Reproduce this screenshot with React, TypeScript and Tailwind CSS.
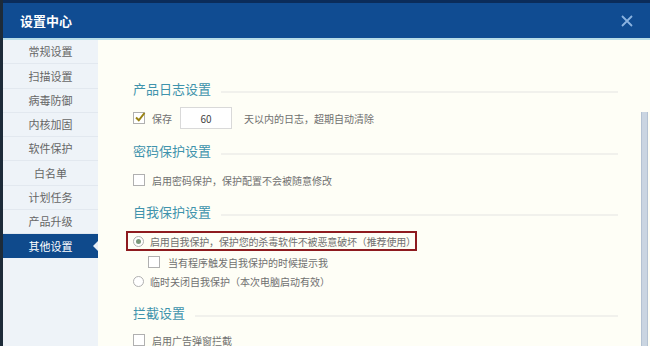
import React from "react";

const FONT = { fontFamily: '"Noto Sans CJK SC", "Noto Sans", sans-serif' };

const navItems = ["常规设置", "扫描设置", "病毒防御", "内核加固", "软件保护", "白名单", "计划任务", "产品升级", "其他设置"];

function Heading({ text }: { text: string }) {
  return (
    <div className="flex h-[22px] items-center pr-[22px]">
      <span className="text-[13px] leading-none text-[#3f93ac]">{text}</span>
      <div className="ml-[10px] mt-[8px] h-[2px] flex-1 bg-[#f1f1ec]" />
    </div>
  );
}

function Checkbox({ checked = false }: { checked?: boolean }) {
  return (
    <span className="relative flex h-[12px] w-[12px] shrink-0 items-center justify-center border border-[#b0b0b0] bg-white">
      {checked && (
        <svg width="12" height="12" viewBox="0 0 12 12" className="absolute -top-[2px] left-[0px]">
          <path d="M2 6.5 L4.8 9.3 L10.5 2" stroke="#9a8312" strokeWidth="2" fill="none" />
        </svg>
      )}
    </span>
  );
}

function Radio({ checked = false }: { checked?: boolean }) {
  return (
    <span className="flex h-[11px] w-[11px] shrink-0 items-center justify-center rounded-full border border-[#b0b0b0] bg-white">
      {checked && <span className="h-[5px] w-[5px] rounded-full bg-[#7a987a]" />}
    </span>
  );
}

export default function App() {
  return (
    <div className="flex h-[346px] w-[650px] flex-col overflow-hidden border-l-[3px] border-[#1d2b39] bg-[#fefef6]" style={FONT}>
      {/* title bar */}
      <div className="flex h-[38px] shrink-0 items-center justify-between border-t-[3px] border-[#0b2c5a] bg-[#104c92] pl-[17px] pr-[17px]">
        <span className="text-[13px] font-bold text-white">设置中心</span>
        <svg width="12" height="12" viewBox="0 0 12 12">
          <path d="M1 1 L11 11 M11 1 L1 11" stroke="#8bb3e0" strokeWidth="1.8" />
        </svg>
      </div>
      <div className="h-[2px] shrink-0 bg-[#b9dde8]" />
      <div className="flex flex-1">
        {/* sidebar */}
        <div className="flex w-[95px] shrink-0 flex-col bg-[#eef3f8]">
          {navItems.map((n) => {
            const sel = n === "其他设置";
            return (
              <div
                key={n}
                className={
                  sel
                    ? "relative flex h-[24.25px] items-center justify-center bg-[#0f4a8c] text-[11px] text-white"
                    : "flex h-[24.25px] items-center justify-center border-b border-[#e2e8ef] text-[11px] text-[#666666]"
                }
              >
                {n}
                {sel && (
                  <span className="absolute right-0 top-[7px] h-0 w-0 border-y-[5px] border-r-[5px] border-y-transparent border-r-[#e8eef6]" />
                )}
              </div>
            );
          })}
        </div>
        {/* content */}
        <div className="flex flex-1 flex-col pl-[35px] pt-[37px] text-[10px] text-[#707070]">
          <Heading text="产品日志设置" />
          <div className="mt-[7px] flex h-[24px] items-center">
            <Checkbox checked />
            <span className="ml-[7px]">保存</span>
            <div className="ml-[8px] flex h-[22px] w-[52px] items-center justify-center border border-[#d9d9d9] bg-white text-[10px] text-[#444]">60</div>
            <span className="ml-[12px]">天以内的日志，超期自动清除</span>
          </div>
          <div className="mt-[9px]">
            <Heading text="密码保护设置" />
          </div>
          <div className="mt-[9px] flex h-[20px] items-center">
            <Checkbox />
            <span className="ml-[7px]">启用密码保护，保护配置不会被随意修改</span>
          </div>
          <div className="mt-[10px]">
            <Heading text="自我保护设置" />
          </div>
          <div className="ml-[-7px] mt-[9px] flex h-[20px] w-[291px] items-center border-2 border-[#8e1b1f] pl-[5px]">
            <Radio checked />
            <span className="ml-[6px] whitespace-nowrap tracking-[-0.15px]">启用自我保护，保护您的杀毒软件不被恶意破坏（推荐使用）</span>
          </div>
          <div className="ml-[15px] mt-[2px] flex h-[18px] items-center">
            <Checkbox />
            <span className="ml-[8px]">当有程序触发自我保护的时候提示我</span>
          </div>
          <div className="mt-[1px] flex h-[18px] items-center">
            <Radio />
            <span className="ml-[6px]">临时关闭自我保护（本次电脑启动有效）</span>
          </div>
          <div className="mt-[11px]">
            <Heading text="拦截设置" />
          </div>
          <div className="mt-[7px] flex h-[20px] items-center">
            <Checkbox />
            <span className="ml-[7px]">启用广告弹窗拦截</span>
          </div>
        </div>
        {/* scrollbar */}
        <div className="flex w-[10px] shrink-0 flex-col pt-[72px]">
          <div className="ml-[1px] w-[7px] flex-1 border-x border-[#b4c2d2] bg-[#cad5e1]" />
        </div>
      </div>
    </div>
  );
}
